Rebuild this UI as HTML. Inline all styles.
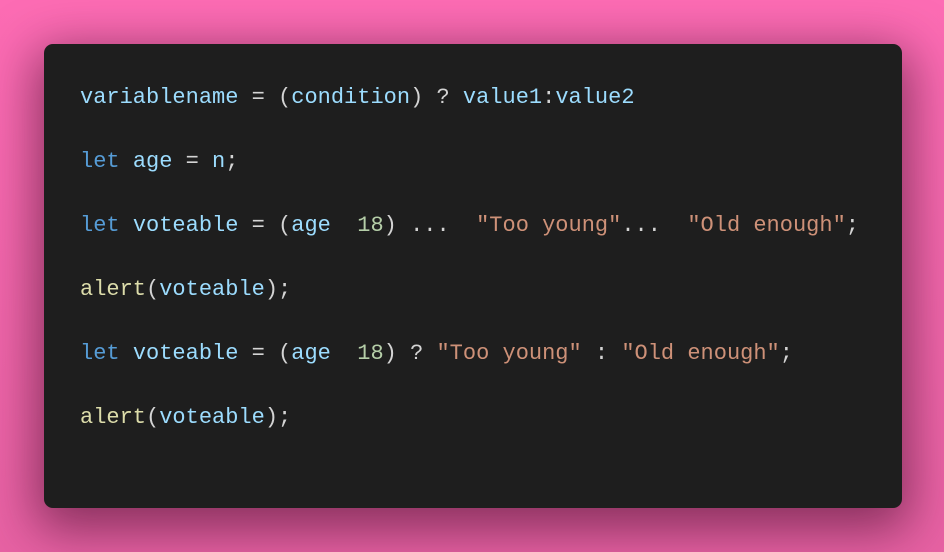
<!DOCTYPE html>
<html><head><style>
html,body{margin:0;padding:0}
body{width:944px;height:552px;overflow:hidden;background:linear-gradient(180deg,#fd6cb4 0%,#e862a4 100%);position:relative;font-family:"Liberation Mono",monospace}
.card{position:absolute;left:44px;top:44px;width:858px;height:464px;background:#1e1e1e;border-radius:9px;box-shadow:0 14px 50px 8px rgba(70,15,45,0.6)}
.l{position:absolute;left:80px;font-size:22px;line-height:26px;white-space:pre;color:#d4d4d4}
.k{color:#569cd6}.v{color:#9cdcfe}.s{color:#ce9178}.n{color:#b5cea8}.f{color:#dcdcaa}
</style></head><body>
<div class="card"></div>
<div class="l" style="top:85px"><span class="v">variablename</span> = (<span class="v">condition</span>) ? <span class="v">value1</span>:<span class="v">value2</span></div>
<div class="l" style="top:149px"><span class="k">let</span> <span class="v">age</span> = <span class="v">n</span>;</div>
<div class="l" style="top:213px"><span class="k">let</span> <span class="v">voteable</span> = (<span class="v">age</span>  <span class="n">18</span>) ...  <span class="s">"Too young"</span>...  <span class="s">"Old enough"</span>;</div>
<div class="l" style="top:277px"><span class="f">alert</span>(<span class="v">voteable</span>);</div>
<div class="l" style="top:341px"><span class="k">let</span> <span class="v">voteable</span> = (<span class="v">age</span>  <span class="n">18</span>) ? <span class="s">"Too young"</span> : <span class="s">"Old enough"</span>;</div>
<div class="l" style="top:405px"><span class="f">alert</span>(<span class="v">voteable</span>);</div>
</body></html>
